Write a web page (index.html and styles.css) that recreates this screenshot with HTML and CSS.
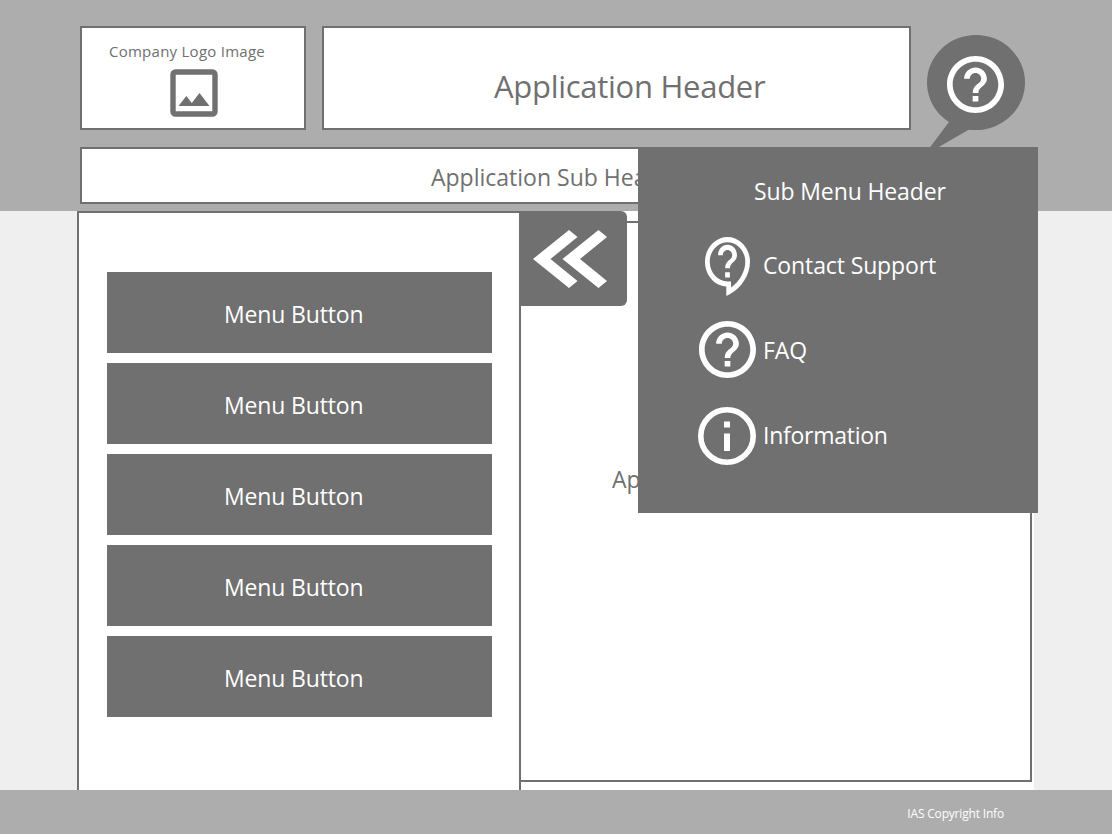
FILE: index.html
```html
<!DOCTYPE html>
<html lang="en">
<head>
<meta charset="utf-8">
<title>Application</title>
<link rel="stylesheet" href="styles.css">
</head>
<body>
<svg class="defs" width="0" height="0">
  <symbol id="help" viewBox="2 2 20 20"><path d="M11 18h2v-2h-2v2zm1-16C6.480 2 2 6.480 2 12s4.480 10 10 10 10-4.480 10-10S17.520 2 12 2zm0 18c-4.410 0-8-3.590-8-8s3.590-8 8-8 8 3.590 8 8-3.590 8-8 8zm0-14c-2.210 0-4 1.790-4 4h2c0-1.100.9-2 2-2s2 .9 2 2c0 2-3 1.750-3 5h2c0-2.250 3-2.500 3-5 0-2.210-1.790-4-4-4z"/></symbol>
</svg>
<header class="top">
  <div class="top-row">
    <div class="box logo">
      <span class="logo-text">Company Logo Image</span>
      <svg class="logo-icon" viewBox="0 0 48 48"><rect x="3" y="3" width="42" height="42" rx="2.500" fill="none" stroke="#707070" stroke-width="5.400"/><path d="M8.500 37h31L29.500 24 21.800 34 16.300 27z" fill="#707070"/></svg>
    </div>
    <div class="box title"><h1 class="title-text">Application Header</h1></div>
  </div>
  <div class="box subtitle"><span class="subtitle-text">Application Sub Header</span></div>
  <svg class="bubble" viewBox="0 0 98 113"><ellipse cx="49" cy="47.500" rx="49" ry="47.500"/><path d="M22 87L2.500 113H10L43 94z"/></svg>
  <svg class="bubble-icon"><use href="#help"/></svg>
</header>
<main class="page">
  <nav class="menu">
    <a class="menu-button">Menu Button</a>
    <a class="menu-button">Menu Button</a>
    <a class="menu-button">Menu Button</a>
    <a class="menu-button">Menu Button</a>
    <a class="menu-button">Menu Button</a>
  </nav>
  <section class="content"><span class="content-text">Application</span></section>
  <div class="collapse"><svg class="chevrons" viewBox="0 0 74 60"><path d="M0 30L36 1 44.500 8 17.500 30 44.500 52 36 59zM29.500 30L65.500 1 74 8 47 30 74 52 65.500 59z"/></svg></div>
</main>
<aside class="popup">
  <h2 class="popup-title">Sub Menu Header</h2>
  <ul class="popup-list">
    <li class="popup-item"><svg class="icon support" viewBox="2 1 19 22.600" preserveAspectRatio="none"><path fill-rule="evenodd" d="M11 23.590v-3.600c-5.010-.26-9-4.420-9-9.490C2 5.260 6.260 1 11.500 1S21 5.260 21 10.500c0 4.950-3.440 9.930-8.570 12.400l-1.430.69zM11.500 3C7.360 3 4 6.360 4 10.500S7.360 18 11.500 18H13v2.300c3.640-2.300 6-6.080 6-9.800C19 6.360 15.640 3 11.500 3z"/><path d="M10.500 14.500h2v2h-2zM12.500 13h-2c0-3.250 3-3 3-5 0-1.100-.9-2-2-2s-2 .9-2 2h-2c0-2.210 1.790-4 4-4s4 1.790 4 4c0 2.500-3 2.750-3 5z"/></svg><span class="item-text contact">Contact Support</span></li>
    <li class="popup-item"><svg class="icon faq"><use href="#help"/></svg><span class="item-text">FAQ</span></li>
    <li class="popup-item"><svg class="icon info" viewBox="0 0 58 58"><circle cx="29" cy="29" r="26.200" fill="none" stroke="#fff" stroke-width="5.600"/><path d="M26 14.500h6v6h-6zM26 26.500h6v17.500h-6z"/></svg><span class="item-text information">Information</span></li>
  </ul>
</aside>
<footer class="footer"><span class="copyright">IAS Copyright Info</span></footer>
</body>
</html>
```
FILE: styles.css
```css
* { box-sizing: border-box; }
body {
  margin: 0;
  width: 1112px;
  height: 834px;
  display: flex;
  flex-direction: column;
  position: relative;
  overflow: hidden;
  background: #efefef;
  color: #707070;
  font-family: "Open Sans", "Noto Sans", sans-serif;
  font-size: 23px;
  letter-spacing: -0.12px;
  white-space: nowrap;
}
h1, h2, ul { margin: 0; padding: 0; font-weight: 400; list-style: none; }
svg { flex: none; }
.defs { position: absolute; }
.top { height: 211px; padding: 26px 80px 0; background: #adadad; position: relative; flex: none; }
.top-row { display: flex; gap: 16px; height: 104px; }
.box { background: #fff; border: 2px solid #707070; }
.logo { width: 226px; display: flex; flex-direction: column; align-items: center; padding-top: 13px; }
.logo-text { font-size: 15px; line-height: 20px; letter-spacing: 0.26px; margin-right: 12px; }
.logo-icon { width: 48px; height: 48px; margin: 8px 0 0 2px; }
.title { width: 589px; padding: 38px 0 0 170px; }
.title-text { font-size: 31px; line-height: 40px; letter-spacing: -0.28px; }
.subtitle { width: 951px; height: 57px; margin-top: 17px; padding: 12px 0 0 349px; }
.subtitle-text { display: block; line-height: 32px; letter-spacing: 0; }
.bubble { position: absolute; left: 927px; top: 35px; width: 98px; height: 113px; fill: #707070; }
.bubble-icon { position: absolute; left: 947px; top: 56px; width: 57px; height: 57px; fill: #fff; }
.page { width: 957px; height: 579px; margin-left: 77px; background: #fff; display: flex; position: relative; flex: none; }
.menu {
  width: 444px;
  border: 2px solid #707070;
  border-bottom: 0;
  padding: 59px 27px 0 28px;
  display: flex;
  flex-direction: column;
  gap: 10px;
}
.menu-button { height: 81px; padding: 26px 0 0 117px; background: #707070; color: #fff; line-height: 32px; letter-spacing: -0.16px; }
.content { width: 511px; height: 561px; margin-top: 10px; border: 2px solid #707070; border-left: 0; padding: 240px 0 0 91px; }
.content-text { line-height: 32px; }
.collapse {
  position: absolute;
  left: 442px;
  top: 0;
  width: 108px;
  height: 95px;
  background: #707070;
  border-radius: 0 6px 6px 0;
  padding: 18px 0 0 14px;
}
.chevrons { width: 74px; height: 60px; fill: #fff; display: block; }
.popup { position: absolute; left: 638px; top: 147px; width: 400px; height: 366px; background: #707070; color: #fff; padding: 28px 0 0 59px; }
.popup-title { font-size: 23px; line-height: 32px; padding-left: 57px; }
.popup-list { padding-top: 15px; }
.popup-item { height: 85px; display: flex; align-items: center; gap: 7px; }
.icon { fill: #fff; }
.support { width: 45px; height: 59px; margin: 3px 6px 0 8px; }
.faq { width: 57px; height: 57px; margin: 0 0 0 2px; }
.info { width: 58px; height: 58px; margin: 3px 0 0 1px; }
.item-text { line-height: 32px; }
.information { letter-spacing: -0.26px; }
.footer { height: 44px; background: #adadad; color: #fff; padding: 14px 108px 0 0; display: flex; justify-content: flex-end; flex: none; }
.copyright { font-size: 12px; line-height: 20px; letter-spacing: -0.18px; }
```
